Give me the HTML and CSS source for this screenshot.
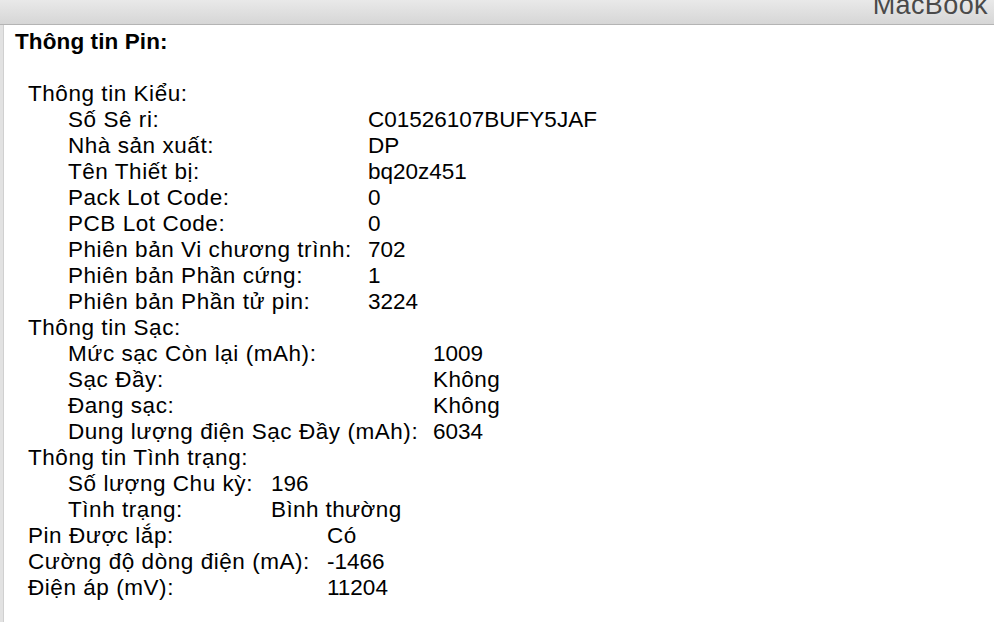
FILE: index.html
```html
<!DOCTYPE html>
<html lang="vi">
<head>
  <meta charset="UTF-8" />
  <title>Thông tin Pin</title>
  <link rel="stylesheet" href="styles.css">
</head>
<body>
  <div class="titlebar"><span class="device">MacBook</span></div>

  <div class="panel">
    <div class="heading">Thông tin Pin:</div>

    <div class="group">
      <div class="group-title">Thông tin Kiểu:</div>
      <div class="rows model">
        <span>Số Sê ri:</span><span>C01526107BUFY5JAF</span>
        <span>Nhà sản xuất:</span><span>DP</span>
        <span>Tên Thiết bị:</span><span>bq20z451</span>
        <span>Pack Lot Code:</span><span>0</span>
        <span>PCB Lot Code:</span><span>0</span>
        <span>Phiên bản Vi chương trình:</span><span>702</span>
        <span>Phiên bản Phần cứng:</span><span>1</span>
        <span>Phiên bản Phần tử pin:</span><span>3224</span>
      </div>
    </div>

    <div class="group">
      <div class="group-title">Thông tin Sạc:</div>
      <div class="rows charge">
        <span>Mức sạc Còn lại (mAh):</span><span>1009</span>
        <span>Sạc Đầy:</span><span class="word">Không</span>
        <span>Đang sạc:</span><span class="word">Không</span>
        <span>Dung lượng điện Sạc Đầy (mAh):</span><span>6034</span>
      </div>
    </div>

    <div class="group">
      <div class="group-title">Thông tin Tình trạng:</div>
      <div class="rows health">
        <span>Số lượng Chu kỳ:</span><span>196</span>
        <span>Tình trạng:</span><span class="word">Bình thường</span>
      </div>
    </div>

    <div class="rows top">
      <span>Pin Được lắp:</span><span class="word">Có</span>
      <span>Cường độ dòng điện (mA):</span><span>-1466</span>
      <span>Điện áp (mV):</span><span>11204</span>
    </div>
  </div>
</body>
</html>
```

FILE: styles.css
```css
body {
  margin: 0;
  font-family: "Liberation Sans", Arial, sans-serif;
  font-size: 22.5px;
  color: #000;
  background: #fff;
  height: 622px;
  overflow: hidden;
}
.titlebar {
  height: 24px;
  background: linear-gradient(#e9e9e9, #d6d6d6);
  border-bottom: 1px solid #b4b4b4;
  overflow: hidden;
  display: flex;
  justify-content: flex-end;
  align-items: flex-end;
  padding-right: 6px;
}
.device {
  font-size: 27px;
  color: #4a4a4a;
  line-height: 1;
  margin-bottom: 5px;
  letter-spacing: 0.4px;
}
.panel {
  border-left: 3px solid #e2e2e2;
  box-shadow: inset 1px 0 0 #d0d0d0;
  padding: 4px 0 0 12px;
  height: 600px;
  line-height: 26px;
}
.heading {
  font-weight: bold;
  margin-bottom: 26px;
  letter-spacing: 0.1px;
}
.group-title,
.rows span:nth-child(odd) {
  letter-spacing: 0.55px;
}
.rows .word {
  letter-spacing: 0.4px;
}
.group-title {
  margin-left: 13px;
}
.rows {
  display: grid;
  margin-left: 53px;
}
.rows.top {
  margin-left: 13px;
  grid-template-columns: 299px auto;
}
.model {
  grid-template-columns: 300px auto;
}
.charge {
  grid-template-columns: 365px auto;
}
.health {
  grid-template-columns: 203px auto;
}
```
